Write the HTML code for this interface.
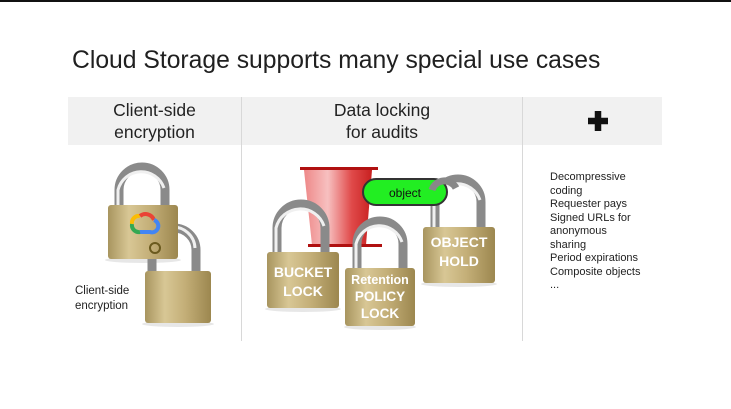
<!DOCTYPE html>
<html><head><meta charset="utf-8"><style>
html,body{margin:0;padding:0;background:#fff;width:731px;height:409px;overflow:hidden;font-family:"Liberation Sans",sans-serif;position:relative}
.topline{position:absolute;left:0;top:0;width:731px;height:2px;background:#111}
.title{position:absolute;left:72px;top:47px;font-size:24.7px;color:#202020;white-space:nowrap}
.band{position:absolute;left:68px;top:97px;width:594px;height:48px;background:#f1f1f1}
.vl{position:absolute;top:97px;width:1px;height:244px;background:#d8d8d8}
.h{position:absolute;text-align:center;font-size:17.5px;line-height:22px;color:#222}
.list{position:absolute;left:550px;top:171px;font-size:11px;line-height:13.5px;color:#222}
.cap{position:absolute;left:75px;top:284px;font-size:11.5px;line-height:15px;color:#222}
svg{position:absolute;left:0;top:0}
</style></head><body>
<div class="topline"></div>
<div class="title">Cloud Storage supports many special use cases</div>
<div class="band"></div>
<div class="vl" style="left:241px"></div>
<div class="vl" style="left:522px"></div>
<div class="h" style="left:68px;width:173px;top:99px">Client-side<br>encryption</div>
<div class="h" style="left:242px;width:280px;top:99px">Data locking<br>for audits</div>
<svg width="731" height="409">
<defs>
<linearGradient id="gold" x1="0" y1="0" x2="1" y2="0">
<stop offset="0" stop-color="#a8955f"/><stop offset=".3" stop-color="#d8c795"/><stop offset=".6" stop-color="#c4af78"/><stop offset="1" stop-color="#9c874f"/></linearGradient>
<linearGradient id="red" x1="0" y1="0" x2="1" y2="0">
<stop offset="0" stop-color="#e88"/><stop offset=".35" stop-color="#f7c0c0"/><stop offset=".7" stop-color="#e04a4a"/><stop offset="1" stop-color="#c82020"/></linearGradient>
</defs>
<path d="M588 121 H608 M598 111 V131" stroke="#111" stroke-width="6.5"/>
<path d="M304 170 L372 170 L366 245 L312 245 Z" fill="url(#red)"/>
<rect x="300" y="167" width="78" height="3" fill="#b01010"/>
<rect x="308" y="244" width="74" height="3" fill="#b01010"/>
<g fill="#ddd" opacity=".7">
<ellipse cx="143" cy="260" rx="38" ry="3"/><ellipse cx="178" cy="324" rx="36" ry="3"/>
<ellipse cx="303" cy="309" rx="38" ry="3"/><ellipse cx="380" cy="327" rx="36" ry="3"/><ellipse cx="459" cy="284" rx="38" ry="3"/></g>
<g fill="none" stroke-linecap="butt">
<g stroke="#8a8a8a" stroke-width="9">
<path d="M119 206 V190 A23 23 0 0 1 165 190 V206"/>
<path d="M152 272 V258 M196 272 V250 A22 22 0 0 0 152 250"/>
<path d="M277 253 V228 A24 24 0 0 1 325 228 V253"/>
<path d="M357 270 V244 A23 23 0 0 1 403 244 V270"/>
<path d="M435 228 V202 A23 23 0 0 1 481 202 V228"/>
</g>
<g stroke="#f0f0f0" stroke-width="3">
<path d="M118 206 V190 A24 24 0 0 1 164 188"/>
<path d="M151 250 A22 22 0 0 1 195 248"/>
<path d="M276 253 V228 A25 25 0 0 1 324 226"/>
<path d="M356 270 V244 A24 24 0 0 1 402 242"/>
<path d="M434 228 V202 A24 24 0 0 1 480 200"/>
</g>
</g>
<rect x="363" y="179" width="84" height="26" rx="13" fill="#22ee22" stroke="#333" stroke-width="2"/>
<text x="405" y="197" text-anchor="middle" font-family="Liberation Sans" font-size="12" fill="#111">object</text>
<path d="M432 190 A13 13 0 0 1 456 188" fill="none" stroke="#888" stroke-width="7"/>
<g fill="url(#gold)">
<rect x="108" y="205" width="70" height="54" rx="3"/>
<rect x="145" y="271" width="66" height="52" rx="3"/>
<rect x="267" y="252" width="72" height="56" rx="3"/>
<rect x="345" y="268" width="70" height="58" rx="3"/>
<rect x="423" y="227" width="72" height="56" rx="3"/>
</g>
<circle cx="155" cy="248" r="5" fill="none" stroke="#6b5a1e" stroke-width="2"/>
<g fill="none" stroke-width="4">
<path d="M132 224 A7 7 0 0 1 140 216" stroke="#fbbc05"/>
<path d="M140 216 A9 9 0 0 1 154 220" stroke="#ea4335"/>
<path d="M154 220 A6 6 0 0 1 150 232 H140" stroke="#4285f4"/>
<path d="M140 232 A7 7 0 0 1 132 224" stroke="#34a853"/>
</g>
<g font-family="Liberation Sans" font-weight="bold" fill="#fff" text-anchor="middle">
<text x="303" y="277" font-size="14">BUCKET</text><text x="303" y="296" font-size="14">LOCK</text>
<text x="380" y="284" font-size="12.5">Retention</text><text x="380" y="301" font-size="13.5">POLICY</text><text x="380" y="318" font-size="13.5">LOCK</text>
<text x="459" y="247" font-size="14">OBJECT</text><text x="459" y="266" font-size="14">HOLD</text>
</g>
</svg>
<div class="cap">Client-side<br>encryption</div>
<div class="list">Decompressive<br>coding<br>Requester pays<br>Signed URLs for<br>anonymous<br>sharing<br>Period expirations<br>Composite objects<br>...</div>
</body></html>
